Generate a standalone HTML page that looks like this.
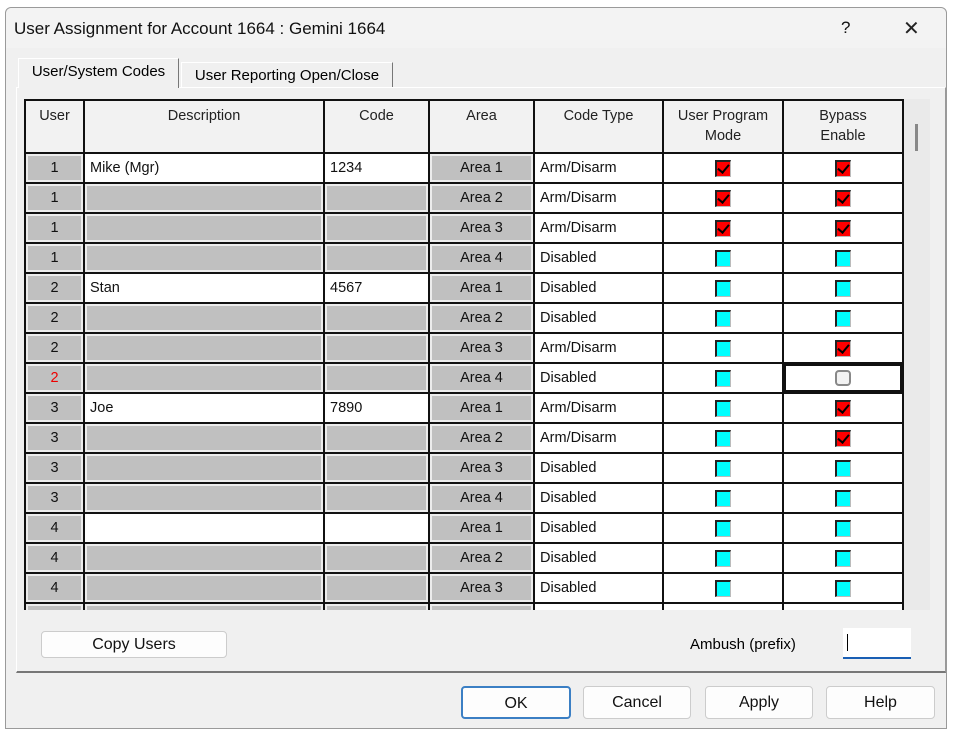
<!DOCTYPE html>
<html><head><style>
*{box-sizing:border-box;margin:0;padding:0}
body{width:953px;height:733px;background:#fff;font-family:"Liberation Sans",Arial,sans-serif;position:relative;overflow:hidden}
.win{position:absolute;left:5px;top:7px;width:942px;height:722px;background:#f0f0f0;border:1px solid #9a9a9a;border-radius:6px 6px 0 0}
.title{position:absolute;left:0;top:0;width:940px;height:40px;background:#f3f3f3;border-radius:6px 6px 0 0}
.title span{position:absolute;left:8px;top:11px;font-size:17px;color:#111}
.tab{position:absolute;font-size:15px;color:#000;border:1px solid #999;border-bottom:none;background:#f0f0f0;padding:4px 0;text-align:center}
.panel{position:absolute;left:16px;top:87px;width:930px;height:586px;background:#f0f0f0;border:1px solid #fff;border-right:1px solid #999;border-bottom:2px solid #777}
table{position:absolute;left:24px;top:99px;border-collapse:collapse;table-layout:fixed;font-size:14.5px;background:#fff;color:#111}
td{border:2px solid #111;height:30px;padding:0 5px;white-space:nowrap;overflow:hidden}
th{border:2px solid #111;height:53px;font-weight:normal;vertical-align:top;padding-top:5px;background:#f2f2f2;color:#222;line-height:20px;font-size:14.5px}
.g{background:#c0c0c0;box-shadow:inset 0 0 0 2px #ececec;text-align:center}
.gl{background:#c0c0c0;box-shadow:inset 0 0 0 2px #ececec}
.c{text-align:center}
.cb{display:inline-block;width:16px;height:17px;background:#00ffff;border-top:2px solid #222;border-left:2px solid #222;border-right:1px solid #bbb;border-bottom:1px solid #bbb;vertical-align:middle;position:relative}
.ck{background:#f00}
.ck::after{content:"";position:absolute;left:3px;top:0px;width:5px;height:9px;border-right:2.5px solid #000;border-bottom:2.5px solid #000;transform:rotate(40deg)}
.btn{position:absolute;height:28px;background:#fdfdfd;border:1px solid #ccc;border-radius:4px;font-size:16px;text-align:center;line-height:26px;color:#111}
</style></head><body>
<div class="win"><div class="title"><span>User Assignment for Account 1664 : Gemini 1664</span>
<span style="left:835px;top:10px">?</span><span style="left:897px;top:8px;font-size:20px;font-weight:300;color:#222">✕</span></div></div>
<div class="panel"></div>
<div class="tab" style="left:18px;top:58px;width:161px;height:30px;background:#f0f0f0;border-color:#fff #777 #fff #fff;z-index:2">User/System Codes</div>
<div class="tab" style="left:181px;top:62px;width:212px;height:25px;padding-top:4px;border-color:#fff #777 #fff #fff">User Reporting Open/Close</div>
<div style="position:absolute;left:904px;top:99px;width:26px;height:511px;background:#eaeaea"></div>
<div style="position:absolute;left:915px;top:124px;width:3px;height:27px;background:#888"></div>
<div style="position:absolute;left:24px;top:99px;width:880px;height:511px;overflow:hidden">
<table style="left:0;top:0">
<colgroup><col style="width:59px"><col style="width:240px"><col style="width:105px"><col style="width:105px"><col style="width:129px"><col style="width:120px"><col style="width:120px"></colgroup>
<tr><th>User</th><th>Description</th><th>Code</th><th>Area</th><th>Code Type</th><th>User Program<br>Mode</th><th>Bypass<br>Enable</th></tr>
<tr><td class="g">1</td><td>Mike (Mgr)</td><td>1234</td><td class="g">Area 1</td><td>Arm/Disarm</td><td class="c"><span class="cb ck"></span></td><td class="c"><span class="cb ck"></span></td></tr>
<tr><td class="g">1</td><td class="gl"></td><td class="gl"></td><td class="g">Area 2</td><td>Arm/Disarm</td><td class="c"><span class="cb ck"></span></td><td class="c"><span class="cb ck"></span></td></tr>
<tr><td class="g">1</td><td class="gl"></td><td class="gl"></td><td class="g">Area 3</td><td>Arm/Disarm</td><td class="c"><span class="cb ck"></span></td><td class="c"><span class="cb ck"></span></td></tr>
<tr><td class="g">1</td><td class="gl"></td><td class="gl"></td><td class="g">Area 4</td><td>Disabled</td><td class="c"><span class="cb"></span></td><td class="c"><span class="cb"></span></td></tr>
<tr><td class="g">2</td><td>Stan</td><td>4567</td><td class="g">Area 1</td><td>Disabled</td><td class="c"><span class="cb"></span></td><td class="c"><span class="cb"></span></td></tr>
<tr><td class="g">2</td><td class="gl"></td><td class="gl"></td><td class="g">Area 2</td><td>Disabled</td><td class="c"><span class="cb"></span></td><td class="c"><span class="cb"></span></td></tr>
<tr><td class="g">2</td><td class="gl"></td><td class="gl"></td><td class="g">Area 3</td><td>Arm/Disarm</td><td class="c"><span class="cb"></span></td><td class="c"><span class="cb ck"></span></td></tr>
<tr><td class="g" style="color:#e00">2</td><td class="gl"></td><td class="gl"></td><td class="g">Area 4</td><td>Disabled</td><td class="c"><span class="cb"></span></td><td class="c" style="box-shadow:inset 0 0 0 2px #111"><span style="display:inline-block;width:16px;height:16px;border:2px solid #888;border-radius:4px;background:#f2f2f2;vertical-align:middle"></span></td></tr>
<tr><td class="g">3</td><td>Joe</td><td>7890</td><td class="g">Area 1</td><td>Arm/Disarm</td><td class="c"><span class="cb"></span></td><td class="c"><span class="cb ck"></span></td></tr>
<tr><td class="g">3</td><td class="gl"></td><td class="gl"></td><td class="g">Area 2</td><td>Arm/Disarm</td><td class="c"><span class="cb"></span></td><td class="c"><span class="cb ck"></span></td></tr>
<tr><td class="g">3</td><td class="gl"></td><td class="gl"></td><td class="g">Area 3</td><td>Disabled</td><td class="c"><span class="cb"></span></td><td class="c"><span class="cb"></span></td></tr>
<tr><td class="g">3</td><td class="gl"></td><td class="gl"></td><td class="g">Area 4</td><td>Disabled</td><td class="c"><span class="cb"></span></td><td class="c"><span class="cb"></span></td></tr>
<tr><td class="g">4</td><td></td><td></td><td class="g">Area 1</td><td>Disabled</td><td class="c"><span class="cb"></span></td><td class="c"><span class="cb"></span></td></tr>
<tr><td class="g">4</td><td class="gl"></td><td class="gl"></td><td class="g">Area 2</td><td>Disabled</td><td class="c"><span class="cb"></span></td><td class="c"><span class="cb"></span></td></tr>
<tr><td class="g">4</td><td class="gl"></td><td class="gl"></td><td class="g">Area 3</td><td>Disabled</td><td class="c"><span class="cb"></span></td><td class="c"><span class="cb"></span></td></tr>
<tr><td class="g">4</td><td class="gl"></td><td class="gl"></td><td class="g">Area 4</td><td>Disabled</td><td class="c"><span class="cb"></span></td><td class="c"><span class="cb"></span></td></tr>
</table></div>
<div class="btn" style="left:41px;top:631px;width:186px;height:27px">Copy Users</div>
<div style="position:absolute;left:690px;top:636px;font-size:15px">Ambush (prefix)</div>
<div style="position:absolute;left:843px;top:628px;width:68px;height:31px;background:#fff;border-bottom:2px solid #1a5fb4"><div style="position:absolute;left:4px;top:6px;width:1px;height:17px;background:#000"></div></div>
<div class="btn" style="left:461px;top:686px;width:110px;height:33px;line-height:31px;border:2px solid #3b7fc4">OK</div>
<div class="btn" style="left:583px;top:686px;width:108px;height:33px;line-height:31px">Cancel</div>
<div class="btn" style="left:705px;top:686px;width:108px;height:33px;line-height:31px">Apply</div>
<div class="btn" style="left:826px;top:686px;width:109px;height:33px;line-height:31px">Help</div>
</body></html>
